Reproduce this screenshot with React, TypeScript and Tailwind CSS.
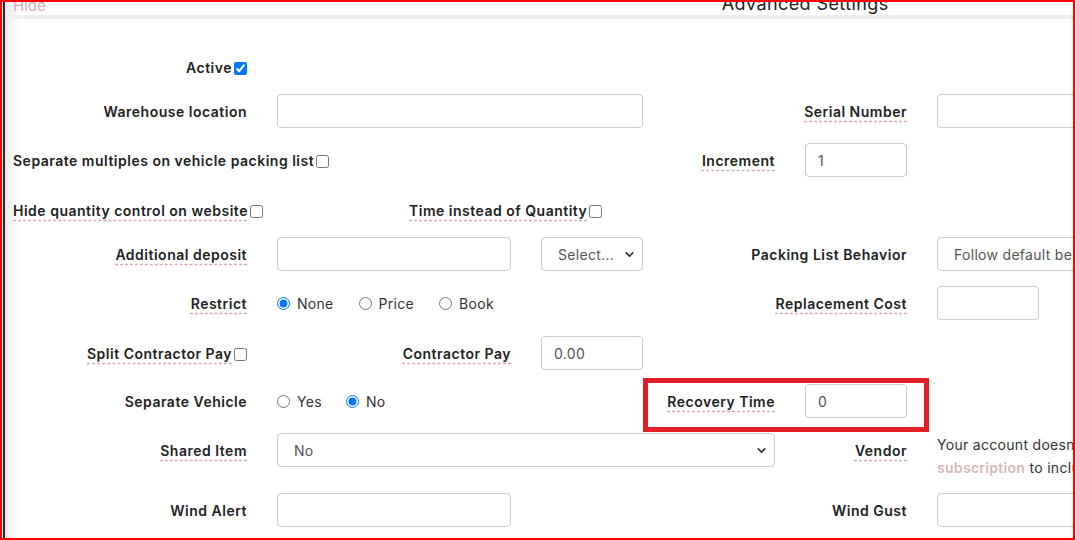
import type { ReactNode } from "react";
import { ChevronDown } from "lucide-react";

const font = { fontFamily: "Inter, 'Noto Sans', sans-serif" };

function Label({ children, dashed, className = "" }: { children: ReactNode; dashed?: boolean; className?: string }) {
  return (
    <span
      className={`text-[14px] font-semibold tracking-[0.5px] text-[#222] ${
        dashed ? "underline decoration-dashed decoration-[#d3aeae] underline-offset-[4px]" : ""
      } ${className}`}
    >
      {children}
    </span>
  );
}

function Box({ value = "", className = "" }: { value?: string; className?: string }) {
  return (
    <div
      className={`flex h-[34px] items-center rounded-[4px] border border-[#ccc] bg-white px-3 text-[14px] tracking-[0.3px] text-[#555] ${className}`}
    >
      {value}
    </div>
  );
}

function Select({ value, className = "" }: { value: string; className?: string }) {
  return (
    <div
      className={`flex h-[34px] items-center justify-between rounded-[4px] border border-[#ccc] bg-white pl-4 pr-[6px] text-[14px] tracking-[0.3px] text-[#555] ${className}`}
    >
      <span className="whitespace-nowrap">{value}</span>
      <ChevronDown size={13} strokeWidth={3} className="text-[#333]" />
    </div>
  );
}

function Check({ checked }: { checked?: boolean }) {
  return <input type="checkbox" defaultChecked={checked} className="ml-[2px] h-[13px] w-[13px] align-middle" />;
}

function Radio({ label, checked }: { label: string; checked?: boolean }) {
  return (
    <label className="flex items-center gap-[7px] text-[14px] tracking-[0.3px] text-[#333]">
      <input type="radio" defaultChecked={checked} className="h-[13px] w-[13px]" />
      {label}
    </label>
  );
}

function Row({ children, top, className = "" }: { children: ReactNode; top: string; className?: string }) {
  return (
    <div className={`grid h-[34px] grid-cols-[repeat(12,132px)] grid-rows-[34px] items-center ${top} ${className}`}>
      {children}
    </div>
  );
}

export default function App() {
  return (
    <div className="h-[540px] w-[1075px] overflow-hidden border-2 border-[#ff0000] bg-white pl-px" style={font}>
      <div className="h-full overflow-hidden border-l-2 border-[#3a2626] bg-[linear-gradient(to_right,#ececec,#ffffff_16px)]">
        <div className="relative ml-[-7px] w-[1584px]">
          {/* header */}
          <div className="-mt-[8px] flex h-[19px] items-end px-[15px]">
            <span className="text-[15px] leading-none text-[#cdb0b8]">Hide</span>
            <span className="ml-[676px] text-[18px] leading-none tracking-[0.4px] text-[#222]">Advanced Settings</span>
          </div>
          <div className="mx-[15px] mt-[2px] h-[4px] bg-[#eee]" />

          <Row top="mt-[31px]">
            <div className="col-span-2 px-[15px] text-right">
              <Label>Active</Label>
              <Check checked />
            </div>
          </Row>

          <Row top="mt-[10px]">
            <div className="col-span-2 px-[15px] text-right">
              <Label>Warehouse location</Label>
            </div>
            <div className="col-span-3 px-[15px]">
              <Box />
            </div>
            <div className="col-span-2 px-[15px] text-right">
              <Label dashed>Serial Number</Label>
            </div>
            <div className="col-span-3 px-[15px]">
              <Box />
            </div>
          </Row>

          <Row top="mt-[15px]">
            <div className="col-span-5 px-[15px]">
              <Label>Separate multiples on vehicle packing list</Label>
              <Check />
            </div>
            <div className="px-[15px] text-right">
              <Label dashed>Increment</Label>
            </div>
            <div className="px-[15px]">
              <Box value="1" />
            </div>
          </Row>

          <Row top="mt-[16px]">
            <div className="col-span-3 px-[15px]">
              <Label dashed>Hide quantity control on website</Label>
              <Check />
            </div>
            <div className="col-span-2 px-[15px]">
              <Label dashed>Time instead of Quantity</Label>
              <Check />
            </div>
          </Row>

          <Row top="mt-[10px]">
            <div className="col-span-2 px-[15px] text-right">
              <Label dashed>Additional deposit</Label>
            </div>
            <div className="col-span-2 px-[15px]">
              <Box />
            </div>
            <div className="px-[15px]">
              <Select value="Select..." />
            </div>
            <div className="col-span-2 px-[15px] text-right">
              <Label>Packing List Behavior</Label>
            </div>
            <div className="col-span-3 px-[15px]">
              <Select value="Follow default behavior" />
            </div>
          </Row>

          <Row top="mt-[15px]">
            <div className="col-span-2 px-[15px] text-right">
              <Label dashed>Restrict</Label>
            </div>
            <div className="col-span-3 flex gap-[25px] px-[15px]">
              <Radio label="None" checked />
              <Radio label="Price" />
              <Radio label="Book" />
            </div>
            <div className="col-span-2 px-[15px] text-right">
              <Label dashed>Replacement Cost</Label>
            </div>
            <div className="px-[15px]">
              <Box />
            </div>
          </Row>

          <Row top="mt-[16px]">
            <div className="col-span-2 px-[15px] text-right">
              <Label dashed>Split Contractor Pay</Label>
              <Check />
            </div>
            <div className="col-span-2 px-[15px] text-right">
              <Label dashed>Contractor Pay</Label>
            </div>
            <div className="px-[15px]">
              <Box value="0.00" />
            </div>
          </Row>

          <Row top="mt-[14px]" className="relative">
            <div className="col-span-2 px-[15px] text-right">
              <Label>Separate Vehicle</Label>
            </div>
            <div className="col-span-2 flex gap-[24px] px-[15px]">
              <Radio label="Yes" />
              <Radio label="No" checked />
            </div>
            <div className="col-span-2 px-[15px] text-right">
              <Label dashed>Recovery Time</Label>
            </div>
            <div className="px-[15px]">
              <Box value="0" />
            </div>
            <div className="absolute left-[645px] top-[-6px] h-[54px] w-[286px] border-[5px] border-[#e41e26]" />
          </Row>

          <Row top="mt-[15px]">
            <div className="col-span-2 px-[15px] text-right">
              <Label dashed>Shared Item</Label>
            </div>
            <div className="col-span-4 px-[15px]">
              <Select value="No" />
            </div>
            <div className="px-[15px] text-right">
              <Label dashed>Vendor</Label>
            </div>
            <div className="col-span-4 self-start whitespace-nowrap px-[15px] text-[14px] leading-[23px] tracking-[0.3px] text-[#333]">
              Your account doesn't include vendors. Please upgrade your
              <br />
              <span className="font-semibold text-[#d6b8b8]">subscription</span> to include this feature.
            </div>
          </Row>

          <Row top="mt-[26px]">
            <div className="col-span-2 px-[15px] text-right">
              <Label>Wind Alert</Label>
            </div>
            <div className="col-span-2 px-[15px]">
              <Box />
            </div>
            <div className="col-span-2 col-start-6 px-[15px] text-right">
              <Label>Wind Gust</Label>
            </div>
            <div className="col-span-3 px-[15px]">
              <Box />
            </div>
          </Row>
        </div>
      </div>
    </div>
  );
}
